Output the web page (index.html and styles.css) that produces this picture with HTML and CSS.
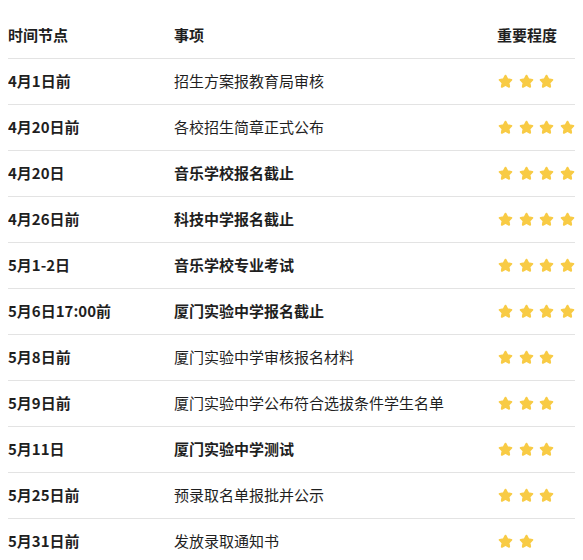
FILE: index.html
```html
<!DOCTYPE html>
<html lang="zh">
<head>
<meta charset="utf-8">
<link rel="stylesheet" href="styles.css">
</head>
<body>
<svg class="defs" width="0" height="0" aria-hidden="true">
  <symbol id="star" viewBox="0 0 24 24">
    <polygon points="12,2.8 14.94,8.45 21.3,9.45 16.76,14.05 17.8,20.4 12,17.5 6.2,20.4 7.24,14.05 2.7,9.45 9.06,8.45" fill="#f8cb45" stroke="#f8cb45" stroke-width="3.2" stroke-linejoin="round"/>
  </symbol>
</svg>
<div class="page">
<div class="table">
  <div class="row head">
    <div class="cell">时间节点</div>
    <div class="cell">事项</div>
    <div class="cell">重要程度</div>
  </div>
  <div class="row">
    <div class="cell b">4月1日前</div>
    <div class="cell">招生方案报教育局审核</div>
    <div class="cell stars"><svg class="s"><use href="#star"/></svg><svg class="s"><use href="#star"/></svg><svg class="s"><use href="#star"/></svg></div>
  </div>
  <div class="row">
    <div class="cell b">4月20日前</div>
    <div class="cell">各校招生简章正式公布</div>
    <div class="cell stars"><svg class="s"><use href="#star"/></svg><svg class="s"><use href="#star"/></svg><svg class="s"><use href="#star"/></svg><svg class="s"><use href="#star"/></svg><svg class="s"><use href="#star"/></svg></div>
  </div>
  <div class="row">
    <div class="cell b">4月20日</div>
    <div class="cell b">音乐学校报名截止</div>
    <div class="cell stars"><svg class="s"><use href="#star"/></svg><svg class="s"><use href="#star"/></svg><svg class="s"><use href="#star"/></svg><svg class="s"><use href="#star"/></svg><svg class="s"><use href="#star"/></svg></div>
  </div>
  <div class="row">
    <div class="cell b">4月26日前</div>
    <div class="cell b">科技中学报名截止</div>
    <div class="cell stars"><svg class="s"><use href="#star"/></svg><svg class="s"><use href="#star"/></svg><svg class="s"><use href="#star"/></svg><svg class="s"><use href="#star"/></svg></div>
  </div>
  <div class="row">
    <div class="cell b">5月1-2日</div>
    <div class="cell b">音乐学校专业考试</div>
    <div class="cell stars"><svg class="s"><use href="#star"/></svg><svg class="s"><use href="#star"/></svg><svg class="s"><use href="#star"/></svg><svg class="s"><use href="#star"/></svg></div>
  </div>
  <div class="row">
    <div class="cell b">5月6日17:00前</div>
    <div class="cell b">厦门实验中学报名截止</div>
    <div class="cell stars"><svg class="s"><use href="#star"/></svg><svg class="s"><use href="#star"/></svg><svg class="s"><use href="#star"/></svg><svg class="s"><use href="#star"/></svg></div>
  </div>
  <div class="row">
    <div class="cell b">5月8日前</div>
    <div class="cell">厦门实验中学审核报名材料</div>
    <div class="cell stars"><svg class="s"><use href="#star"/></svg><svg class="s"><use href="#star"/></svg><svg class="s"><use href="#star"/></svg></div>
  </div>
  <div class="row">
    <div class="cell b">5月9日前</div>
    <div class="cell">厦门实验中学公布符合选拔条件学生名单</div>
    <div class="cell stars"><svg class="s"><use href="#star"/></svg><svg class="s"><use href="#star"/></svg><svg class="s"><use href="#star"/></svg></div>
  </div>
  <div class="row">
    <div class="cell b">5月11日</div>
    <div class="cell b">厦门实验中学测试</div>
    <div class="cell stars"><svg class="s"><use href="#star"/></svg><svg class="s"><use href="#star"/></svg><svg class="s"><use href="#star"/></svg></div>
  </div>
  <div class="row">
    <div class="cell b">5月25日前</div>
    <div class="cell">预录取名单报批并公示</div>
    <div class="cell stars"><svg class="s"><use href="#star"/></svg><svg class="s"><use href="#star"/></svg><svg class="s"><use href="#star"/></svg></div>
  </div>
  <div class="row">
    <div class="cell b">5月31日前</div>
    <div class="cell">发放录取通知书</div>
    <div class="cell stars"><svg class="s"><use href="#star"/></svg><svg class="s"><use href="#star"/></svg></div>
  </div>
</div>
</div>
</body>
</html>
```
FILE: styles.css
```css
html {
  overflow: hidden;
  scrollbar-gutter: auto;
  scrollbar-width: none;
}
::-webkit-scrollbar {
  width: 0;
  height: 0;
  display: none;
}
body {
  margin: 8px;
  background: #ffffff;
  font-family: "Noto Sans CJK SC", "Noto Sans", sans-serif;
  font-size: 15px;
  color: #1f1f1f;
}
.defs {
  position: absolute;
  width: 0;
  height: 0;
}
.page {
  margin-right: -16px;
  overflow: hidden;
}
.table {
  width: 640px;
}
.row {
  display: grid;
  grid-template-columns: 166px 323px 1fr;
  border-bottom: 1px solid #e3e3e3;
  padding: 11px 0 12px;
  line-height: 22px;
}
.row.head {
  padding: 16px 0 12px;
  font-weight: 700;
}
.cell {
  white-space: nowrap;
}
.b {
  font-weight: 700;
}
.stars {
  display: flex;
  align-items: center;
  gap: 5.5px;
  padding-left: 1px;
}
.s {
  width: 15px;
  height: 15px;
  flex: none;
}
```
